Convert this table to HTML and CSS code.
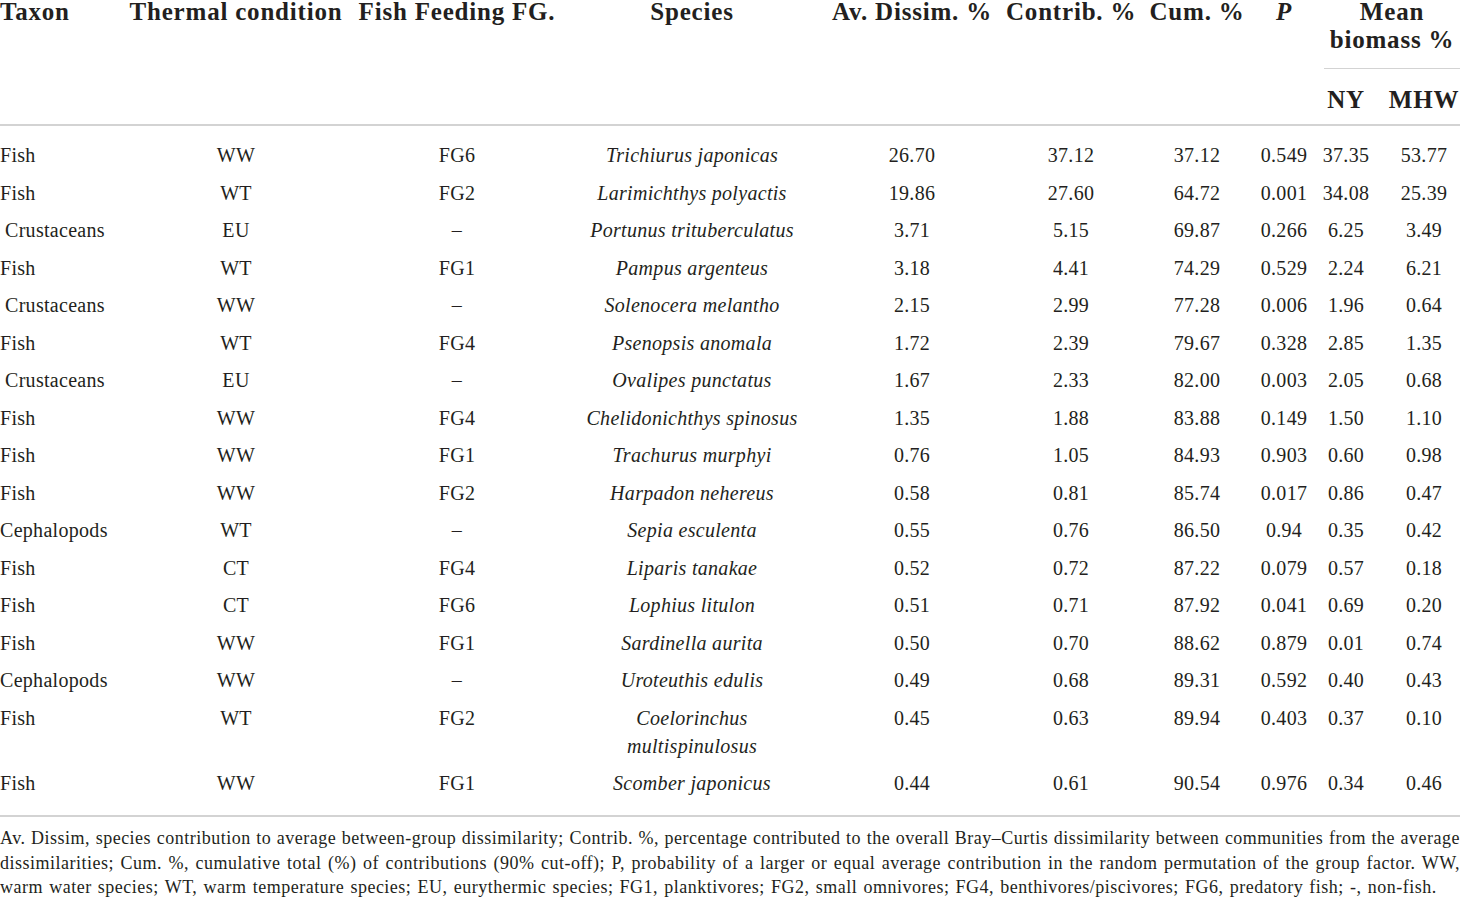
FILE: index.html
```html
<!DOCTYPE html>
<html lang="en">
<head>
<meta charset="utf-8">
<title>SIMPER table</title>
<link rel="stylesheet" href="styles.css">
</head>
<body>
<div class="wrap">
<table class="simper">
  <colgroup>
    <col class="c-taxon"><col class="c-therm"><col class="c-fg"><col class="c-species"><col class="c-av"><col class="c-contrib"><col class="c-cum"><col class="c-p"><col class="c-ny"><col class="c-mhw">
  </colgroup>
  <thead>
    <tr class="h1">
      <th rowspan="2" class="left">Taxon</th>
      <th rowspan="2">Thermal condition</th>
      <th rowspan="2">Fish Feeding FG.</th>
      <th rowspan="2">Species</th>
      <th rowspan="2">Av. Dissim. %</th>
      <th rowspan="2">Contrib. %</th>
      <th rowspan="2">Cum. %</th>
      <th rowspan="2"><i>P</i></th>
      <th colspan="2" class="group"><div class="group-in">Mean<br>biomass %</div></th>
    </tr>
    <tr class="h2">
      <th class="ny">NY</th>
      <th class="mhw">MHW</th>
    </tr>
  </thead>
  <tbody>
    <tr class="first"><td>Fish</td><td>WW</td><td>FG6</td><td><i>Trichiurus japonicas</i></td><td>26.70</td><td>37.12</td><td>37.12</td><td>0.549</td><td>37.35</td><td class="mhw">53.77</td></tr>
    <tr><td>Fish</td><td>WT</td><td>FG2</td><td><i>Larimichthys polyactis</i></td><td>19.86</td><td>27.60</td><td>64.72</td><td>0.001</td><td>34.08</td><td class="mhw">25.39</td></tr>
    <tr><td class="ind">Crustaceans</td><td>EU</td><td>–</td><td><i>Portunus trituberculatus</i></td><td>3.71</td><td>5.15</td><td>69.87</td><td>0.266</td><td>6.25</td><td class="mhw">3.49</td></tr>
    <tr><td>Fish</td><td>WT</td><td>FG1</td><td><i>Pampus argenteus</i></td><td>3.18</td><td>4.41</td><td>74.29</td><td>0.529</td><td>2.24</td><td class="mhw">6.21</td></tr>
    <tr><td class="ind">Crustaceans</td><td>WW</td><td>–</td><td><i>Solenocera melantho</i></td><td>2.15</td><td>2.99</td><td>77.28</td><td>0.006</td><td>1.96</td><td class="mhw">0.64</td></tr>
    <tr><td>Fish</td><td>WT</td><td>FG4</td><td><i>Psenopsis anomala</i></td><td>1.72</td><td>2.39</td><td>79.67</td><td>0.328</td><td>2.85</td><td class="mhw">1.35</td></tr>
    <tr><td class="ind">Crustaceans</td><td>EU</td><td>–</td><td><i>Ovalipes punctatus</i></td><td>1.67</td><td>2.33</td><td>82.00</td><td>0.003</td><td>2.05</td><td class="mhw">0.68</td></tr>
    <tr><td>Fish</td><td>WW</td><td>FG4</td><td><i>Chelidonichthys spinosus</i></td><td>1.35</td><td>1.88</td><td>83.88</td><td>0.149</td><td>1.50</td><td class="mhw">1.10</td></tr>
    <tr><td>Fish</td><td>WW</td><td>FG1</td><td><i>Trachurus murphyi</i></td><td>0.76</td><td>1.05</td><td>84.93</td><td>0.903</td><td>0.60</td><td class="mhw">0.98</td></tr>
    <tr><td>Fish</td><td>WW</td><td>FG2</td><td><i>Harpadon nehereus</i></td><td>0.58</td><td>0.81</td><td>85.74</td><td>0.017</td><td>0.86</td><td class="mhw">0.47</td></tr>
    <tr><td>Cephalopods</td><td>WT</td><td>–</td><td><i>Sepia esculenta</i></td><td>0.55</td><td>0.76</td><td>86.50</td><td>0.94</td><td>0.35</td><td class="mhw">0.42</td></tr>
    <tr><td>Fish</td><td>CT</td><td>FG4</td><td><i>Liparis tanakae</i></td><td>0.52</td><td>0.72</td><td>87.22</td><td>0.079</td><td>0.57</td><td class="mhw">0.18</td></tr>
    <tr><td>Fish</td><td>CT</td><td>FG6</td><td><i>Lophius litulon</i></td><td>0.51</td><td>0.71</td><td>87.92</td><td>0.041</td><td>0.69</td><td class="mhw">0.20</td></tr>
    <tr><td>Fish</td><td>WW</td><td>FG1</td><td><i>Sardinella aurita</i></td><td>0.50</td><td>0.70</td><td>88.62</td><td>0.879</td><td>0.01</td><td class="mhw">0.74</td></tr>
    <tr><td>Cephalopods</td><td>WW</td><td>–</td><td><i>Uroteuthis edulis</i></td><td>0.49</td><td>0.68</td><td>89.31</td><td>0.592</td><td>0.40</td><td class="mhw">0.43</td></tr>
    <tr><td>Fish</td><td>WT</td><td>FG2</td><td><i>Coelorinchus<br>multispinulosus</i></td><td>0.45</td><td>0.63</td><td>89.94</td><td>0.403</td><td>0.37</td><td class="mhw">0.10</td></tr>
    <tr class="last"><td>Fish</td><td>WW</td><td>FG1</td><td><i>Scomber japonicus</i></td><td>0.44</td><td>0.61</td><td>90.54</td><td>0.976</td><td>0.34</td><td class="mhw">0.46</td></tr>
  </tbody>
</table>
<p class="note"><span class="line">Av. Dissim, species contribution to average between-group dissimilarity; Contrib. %, percentage contributed to the overall Bray–Curtis dissimilarity between communities from the average</span><span class="line">dissimilarities; Cum. %, cumulative total (%) of contributions (90% cut-off); P, probability of a larger or equal average contribution in the random permutation of the group factor. WW,</span><span class="line end">warm water species; WT, warm temperature species; EU, eurythermic species; FG1, planktivores; FG2, small omnivores; FG4, benthivores/piscivores; FG6, predatory fish; -, non-fish.</span></p>
</div>
</body>
</html>
```

FILE: styles.css
```css
html, body {
  margin: 0;
  padding: 0;
  background: #ffffff;
}

body {
  font-family: "Liberation Serif", "Times New Roman", serif;
  color: #231f20;
  width: 1460px;
  overflow: hidden;
}

.wrap {
  margin-top: -2px;
}

.simper {
  width: 1460px;
  table-layout: fixed;
  border-collapse: separate;
  border-spacing: 0;
}

.c-taxon { width: 124px; }
.c-therm { width: 224px; }
.c-fg { width: 218px; }
.c-species { width: 252px; }
.c-av { width: 188px; }
.c-contrib { width: 130px; }
.c-cum { width: 122px; }
.c-p { width: 52px; }
.c-ny { width: 72px; }
.c-mhw { width: 78px; }

.simper th {
  font-size: 25px;
  letter-spacing: 0.8px;
  line-height: 28px;
  font-weight: bold;
  text-align: center;
  vertical-align: top;
  padding: 0;
  white-space: nowrap;
}

.simper th.left {
  text-align: left;
}

.simper thead th[rowspan] {
  border-bottom: 2px solid #d3d3d3;
}

.simper th.group {
  padding-left: 14px;
}

.group-in {
  padding-bottom: 14px;
  border-bottom: 1px solid #d3d3d3;
}

.simper .h2 th {
  padding-top: 17px;
  padding-bottom: 10px;
  border-bottom: 2px solid #d3d3d3;
}

.simper .mhw {
  padding-left: 6px;
}

.simper td {
  font-size: 20px;
  letter-spacing: 0.3px;
  line-height: 28px;
  text-align: center;
  vertical-align: top;
  padding: 4.75px 0;
  white-space: nowrap;
}

.simper td:first-child {
  text-align: left;
}

.simper td.ind {
  padding-left: 5px;
}

.simper tr.first td {
  padding-top: 15.25px;
}

.simper tr.last td {
  padding-bottom: 17.75px;
  border-bottom: 2px solid #d3d3d3;
}

.note {
  margin: 9px 0 0 0;
  font-size: 18px;
  letter-spacing: 0.5px;
  line-height: 24.5px;
}

.note .line {
  display: block;
  text-align: justify;
  text-align-last: justify;
}

.note .line.end {
  text-align: left;
  text-align-last: left;
  word-spacing: 1.2px;
}
```
